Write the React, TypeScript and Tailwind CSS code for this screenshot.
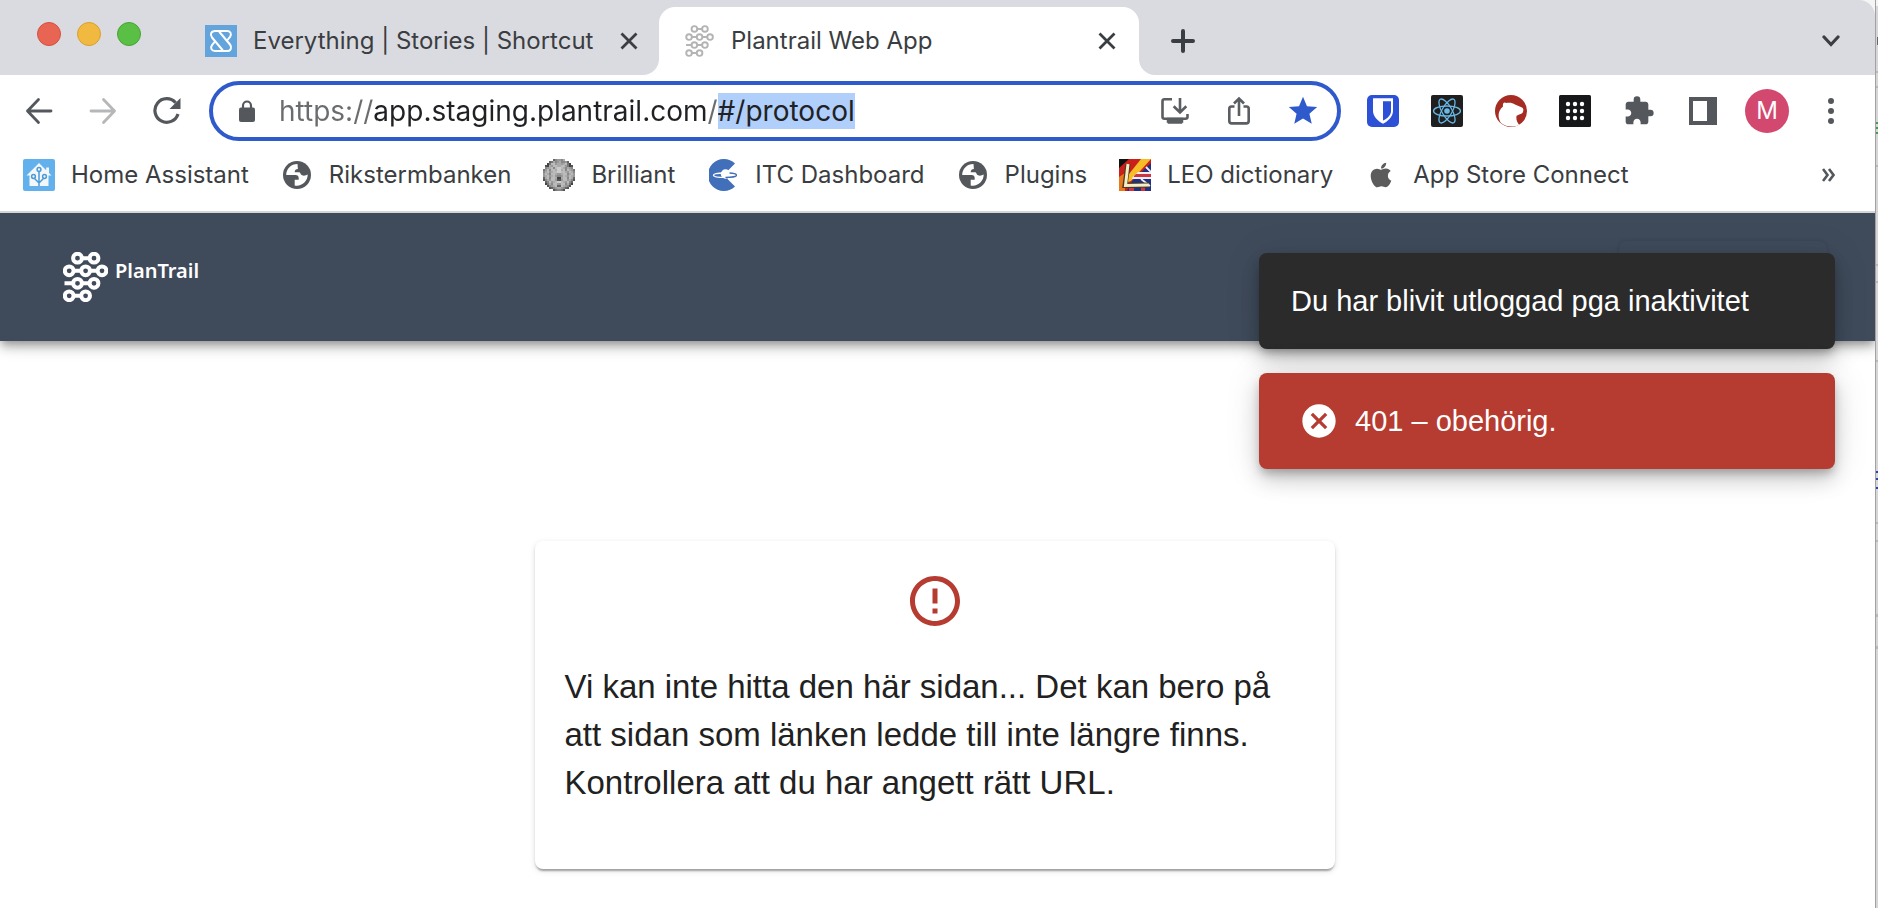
import React, { useEffect, useRef } from "react";
import { MdExtension, MdStar, MdCancel, MdErrorOutline } from "react-icons/md";
import { FaApple } from "react-icons/fa";

function ShortcutIcon() {
  return (
    <svg viewBox="0 0 32 32" className="size-8 shrink-0" aria-hidden="true">
      <rect width="32" height="32" fill="#63a4dd" />
      <g fill="none" stroke="#fff" strokeWidth="2" strokeLinejoin="round" strokeLinecap="round">
        <path d="M22.500 15l2.500-3.200C27 9 25.500 6 22 6H10C6 6 4.800 9.800 7 12.500L17.500 25" />
        <path d="M9.500 17 7 20.200C5 23 6.500 26 10 26h12c4 0 5.200-3.800 3-6.500L14.500 7" />
      </g>
    </svg>
  );
}

function NodesIcon({ className, stroke }: { className: string; stroke: number }) {
  return (
    <svg viewBox="0 0 45 50" className={className} fill="none" stroke="currentColor" strokeWidth={stroke} aria-hidden="true">
      <circle cx="14.500" cy="6.200" r="4.400" />
      <circle cx="31" cy="6.200" r="4.400" />
      <circle cx="6.200" cy="18.800" r="4.400" />
      <circle cx="22.600" cy="18.800" r="4.400" />
      <circle cx="39" cy="18.800" r="4.400" />
      <circle cx="14.500" cy="31.300" r="4.400" />
      <circle cx="31" cy="31.300" r="4.400" />
      <circle cx="6.200" cy="43.800" r="4.400" />
      <circle cx="22.600" cy="43.800" r="4.400" />
      <path d="M19 6.200h7.500M10.500 18.800h7.500M27 18.800h7.500M1.500 31.300H10M19 31.300h7.500M10.500 43.800h7.500" />
    </svg>
  );
}

function CloseIcon() {
  return (
    <svg viewBox="0 0 18 18" className="size-[18px]" stroke="#3a3d41" strokeWidth="2.800" aria-hidden="true">
      <path d="M1.500 1.500l15 15M16.500 1.500l-15 15" />
    </svg>
  );
}

function ArrowIcon({ flip }: { flip?: boolean }) {
  return (
    <svg viewBox="0 0 28 28" className={flip ? "size-7 -scale-x-100" : "size-7"} fill="none" stroke="currentColor" strokeWidth="2.800" strokeLinecap="round" strokeLinejoin="round" aria-hidden="true">
      <path d="M26 14H2.500M13.500 2.500 2.500 14l11 11.500" />
    </svg>
  );
}

function ReloadIcon() {
  return (
    <svg viewBox="0 0 28 28" className="size-7" aria-hidden="true">
      <path d="M25 17A11.800 11.800 0 1 1 22.600 5.700" fill="none" stroke="#54585d" strokeWidth="3.200" />
      <path d="M27.500 1v11H16.500z" fill="#54585d" />
    </svg>
  );
}

function LockIcon() {
  return (
    <svg viewBox="0 0 16 22" className="h-[22px] w-4" aria-hidden="true">
      <rect y="7.500" width="16" height="14.500" rx="2" fill="#54585d" />
      <path d="M4 9V5.500a4 4 0 0 1 8 0V9" fill="none" stroke="#54585d" strokeWidth="2.200" />
    </svg>
  );
}

function InstallIcon() {
  return (
    <svg viewBox="0 0 28 28" className="size-7" fill="none" stroke="#5a5d61" strokeWidth="2.600" aria-hidden="true">
      <path d="M11 2.300H3.500a2 2 0 0 0-2 2v15.500a2 2 0 0 0 2 2h21a2 2 0 0 0 2-2V17" />
      <path d="M19 1v14M12.700 9.200 19 15.400l6.300-6.200" />
      <path d="M6.500 21.500h15v3.600h-1v1h-13v-1h-1z" fill="#5a5d61" strokeWidth="1.500" />
    </svg>
  );
}

function ShareIcon() {
  return (
    <svg viewBox="0 0 24 30" className="h-[30px] w-6" fill="none" stroke="#5a5d61" strokeWidth="2.600" aria-hidden="true">
      <path d="M7.500 10.500h-3a2.200 2.200 0 0 0-2.200 2.200V25a2.400 2.400 0 0 0 2.400 2.400h14.600a2.400 2.400 0 0 0 2.400-2.400V12.700a2.200 2.200 0 0 0-2.200-2.200h-3" />
      <path d="M12 20V3M7 7.500 12 2.500l5 5" />
    </svg>
  );
}

function BitwardenIcon() {
  return (
    <svg viewBox="0 0 32 32" className="size-8" aria-hidden="true">
      <rect width="32" height="32" rx="5" fill="#2c50d6" />
      <path d="M6 3.300h20v12.500c0 6-5 10.500-10 13-5-2.500-10-7-10-13z" fill="#fff" />
      <path d="M16 6.200h8v10c0 4-3.500 7-8 9.400z" fill="#2c50d6" />
    </svg>
  );
}

function ReactIcon() {
  return (
    <svg viewBox="0 0 32 32" className="size-8" aria-hidden="true">
      <rect width="32" height="32" rx="2" fill="#1f1f1f" />
      <circle cx="16" cy="16" r="2.800" fill="#68b8e8" />
      <g fill="none" stroke="#68b8e8" strokeWidth="1.300">
        <ellipse cx="16" cy="16" rx="13.500" ry="5" />
        <ellipse cx="16" cy="16" rx="13.500" ry="5" transform="rotate(60 16 16)" />
        <ellipse cx="16" cy="16" rx="13.500" ry="5" transform="rotate(120 16 16)" />
      </g>
    </svg>
  );
}

function DogIcon() {
  return (
    <svg viewBox="0 0 32 32" className="size-8" aria-hidden="true">
      <circle cx="16" cy="16" r="16" fill="#a62c23" />
      <path d="M6 28C2.500 23 2.500 16 8 11.500 7.500 8 9 6.500 11.500 8c3-.6 6-.3 8.500 1.500l7 3c1.600 1 1.800 3 .6 5.200-1.400 1.700-4 1.600-6 3-.8 3 .4 6.500 2.600 9.300C18 32.500 11 32 6 28z" fill="#fff" />
    </svg>
  );
}

function DotsIcon() {
  const steps = [9, 16, 23];
  return (
    <svg viewBox="0 0 32 32" className="size-8" aria-hidden="true">
      <rect width="32" height="32" rx="1.500" fill="#17181a" />
      {steps.map((y) => steps.map((x) => <circle key={`${x}-${y}`} cx={x} cy={y} r="2.200" fill="#fff" />))}
    </svg>
  );
}

function HomeAssistantIcon() {
  return (
    <svg viewBox="0 0 32 32" className="size-8" aria-hidden="true">
      <rect width="32" height="32" rx="2" fill="#62b1ec" />
      <path d="M16 4 3.500 16.500h3V27h19V16.500h3L26 14V8.500h-2.800v2.700z" fill="#f4f6f8" />
      <g fill="none" stroke="#4a9bd9" strokeWidth="1.500">
        <path d="M16 27V12.500M16 24l-4.500-4.500V19M16 24l4.500-4.500V19" />
        <circle cx="16" cy="10.500" r="1.900" />
        <circle cx="10.500" cy="17.500" r="1.900" />
        <circle cx="21.500" cy="17.500" r="1.900" />
      </g>
    </svg>
  );
}

function GlobeIcon() {
  return (
    <svg viewBox="0 0 28 28" className="size-7" aria-hidden="true">
      <circle cx="14" cy="14" r="14" fill="#54585d" />
      <path d="M14.500 3C8 3 3.300 7.800 3.200 14h9.500c1.800 0 3 1.200 3 3v1.800h-4v5.800c6.500 1.500 13-4 13-11-2 1-4 1.500-6 .5-1.500-.8-1-2.800-3-2.800h-4c0-2.500 1.200-3.300 3.200-3.300z" fill="#fff" />
    </svg>
  );
}

const sphereRows = [
  "     68998a     ",
  "   67a89a8896   ",
  "  47bb9aa9ab74  ",
  " 54a9bbaabb9745 ",
  " 89ab8bccba8a98 ",
  "79b8bbaccab8ba97",
  "8ab9abbccbba9ba8",
  "9ba8bba99abb8ab9",
  "9ab9ab9889ba9ba9",
  "6ab8bba44abb8ba6",
  "58a9bb9559bb9a85",
  " 68b9abccba9b86 ",
  " 47a8bb99bb8a74 ",
  "  589ab66ba985  ",
  "   5689aa9865   ",
  "     578875     ",
];

function SphereIcon() {
  return (
    <svg viewBox="0 0 16 16" className="size-8" shapeRendering="crispEdges" aria-hidden="true">
      {sphereRows.map((row, y) =>
        row.split("").map((c, x) => (c === " " ? null : <rect key={`${x}-${y}`} x={x} y={y} width="1" height="1" fill={`#${c}${c}${c}`} />)),
      )}
    </svg>
  );
}

function PlanetIcon() {
  return (
    <svg viewBox="0 0 28 32" className="h-8 w-7" aria-hidden="true">
      <path d="M26 4.500A16 16 0 1 0 26 27.500L18.500 20V12z" fill="#416fb9" />
      <circle cx="16.500" cy="15" r="4.700" fill="#fff" />
      <path d="M14 14C8 14 4.500 15 4.500 16.200s4 2.200 12 2.200" fill="none" stroke="#fff" strokeWidth="1.400" />
      <path d="M20.500 14c4.500.2 7 1 7 2.200s-4.500 2.200-11 2.200" fill="none" stroke="#416fb9" strokeWidth="1.400" />
    </svg>
  );
}

function LeoIcon() {
  return (
    <svg viewBox="0 0 32 32" className="size-8" aria-hidden="true">
      <rect width="32" height="32" fill="#c9211a" />
      <path d="M0 0h10L0 9z" fill="#111" />
      <path d="M22 0h10L12 22l-10 3z" fill="#f6bd27" />
      <path d="M0 18l6-4v18H0z" fill="#e87a1c" />
      <path d="M32 4v28H8l5-10z" fill="#22307f" />
      <path d="M13 19l6-6h13v7H13z" fill="#eef0f6" />
      <path d="M15 17l2-2h15v3H15z" fill="#cf3540" />
      <path d="M22 20l9 7M27 8l5 5" stroke="#eef0f6" strokeWidth="1.800" />
      <path d="M10 29h5v3h-5zM22 28h4v4h-4z" fill="#cf3540" />
      <path d="M9 5 6 26.500l24-.5" fill="none" stroke="#4a3c20" strokeWidth="5" />
      <path d="M9 5 6.500 26.500 30 26" fill="none" stroke="#f4edc6" strokeWidth="3" />
    </svg>
  );
}

const bookmarks = [
  { label: "Home Assistant", icon: <HomeAssistantIcon /> },
  { label: "Rikstermbanken", icon: <GlobeIcon /> },
  { label: "Brilliant", icon: <SphereIcon /> },
  { label: "ITC Dashboard", icon: <PlanetIcon /> },
  { label: "Plugins", icon: <GlobeIcon /> },
  { label: "LEO dictionary", icon: <LeoIcon /> },
  { label: "App Store Connect", icon: <FaApple className="size-7 text-[#5c5c5c]" /> },
];

const extensions = [
  { label: "Bitwarden", icon: <BitwardenIcon /> },
  { label: "React Developer Tools", icon: <ReactIcon /> },
  { label: "Dog extension", icon: <DogIcon /> },
  { label: "Grid extension", icon: <DotsIcon /> },
  { label: "Extensions", icon: <MdExtension className="size-8 text-[#54585d]" /> },
];

function IconButton({ label, children }: { label: string; children: React.ReactNode }) {
  return (
    <button type="button" aria-label={label} className="flex h-12 w-16 shrink-0 items-center justify-center">
      {children}
    </button>
  );
}

function TabStrip() {
  return (
    <div className="flex h-[75px] items-end rounded-tr-2xl bg-[#dadbe0] pl-[37px]">
      <div className="flex gap-4 self-start pt-[22px]">
        <button type="button" aria-label="Close window" className="size-6 rounded-full border border-[#d5503f] bg-[#e96553]" />
        <button type="button" aria-label="Minimize window" className="size-6 rounded-full border border-[#d9a02f] bg-[#f1b93f]" />
        <button type="button" aria-label="Zoom window" className="size-6 rounded-full border border-[#46a532] bg-[#5abf45]" />
      </div>
      <div className="ml-12 flex h-[68px] w-[470px] shrink-0 items-center px-4">
        <ShortcutIcon />
        <span className="ml-4 flex-1 whitespace-nowrap">Everything | Stories | Shortcut</span>
        <button type="button" aria-label="Close tab" className="mr-[5px]"><CloseIcon /></button>
      </div>
      <div className="relative flex h-[68px] w-[480px] shrink-0 items-center rounded-t-2xl bg-white px-[26px]">
        <svg viewBox="0 0 16 16" className="absolute right-full bottom-0 size-4" fill="#fff" aria-hidden="true"><path d="M16 0v16H0A16 16 0 0 0 16 0z" /></svg>
        <svg viewBox="0 0 16 16" className="absolute bottom-0 left-full size-4" fill="#fff" aria-hidden="true"><path d="M0 0v16h16A16 16 0 0 1 0 0z" /></svg>
        <NodesIcon className="h-8 w-[29px] text-[#b4b4b4]" stroke={3} />
        <span className="ml-[17px] flex-1 whitespace-nowrap">Plantrail Web App</span>
        <button type="button" aria-label="Close tab" className="-mr-[3px]"><CloseIcon /></button>
      </div>
      <button type="button" aria-label="New tab" className="ml-3 flex h-[68px] w-16 items-center justify-center">
        <svg viewBox="0 0 24 24" className="size-6" stroke="#3a3d41" strokeWidth="4" strokeLinecap="round" aria-hidden="true"><path d="M12 2v20M2 12h20" /></svg>
      </button>
      <button type="button" aria-label="Search tabs" className="mr-3 ml-auto flex h-[68px] w-16 items-center justify-center">
        <svg viewBox="0 0 18 12" className="h-3 w-[18px]" fill="none" stroke="#3a3d41" strokeWidth="3.200" strokeLinecap="round" aria-hidden="true"><path d="M2 2l7 7.500L16 2" /></svg>
      </button>
    </div>
  );
}

const address = "https://app.staging.plantrail.com/#/protocol";

function AddressBar() {
  const ref = useRef<HTMLInputElement>(null);
  useEffect(() => {
    ref.current?.focus();
    ref.current?.setSelectionRange(address.indexOf("#"), address.length);
  }, []);
  return (
    <div className="ml-[10px] flex h-[60px] min-w-0 flex-1 items-center rounded-full border-4 border-[#2f5acb] bg-white pr-[2px] pl-[18px]">
      <span className="flex w-8 shrink-0 justify-center"><LockIcon /></span>
      <input
        ref={ref}
        type="text"
        aria-label="Address"
        defaultValue={address}
        spellCheck={false}
        className="ml-4 h-9 min-w-0 flex-1 bg-[linear-gradient(to_right,#6a6c6f_95px,#202124_95px,#202124_428px,#6a6c6f_428px)] bg-clip-text font-['Inter',sans-serif] text-[28px] leading-9 text-transparent outline-none selection:bg-[#b1cffb] selection:text-[#202124]"
      />
      <IconButton label="Install app"><InstallIcon /></IconButton>
      <IconButton label="Share"><ShareIcon /></IconButton>
      <IconButton label="Bookmark this page"><MdStar className="size-[34px] text-[#2f5acb]" /></IconButton>
    </div>
  );
}

function Toolbar() {
  return (
    <div className="flex h-[72px] items-center bg-white pr-3 pl-[7px]">
      <div className="flex text-[#54585d]">
        <IconButton label="Back"><ArrowIcon /></IconButton>
        <span className="text-[#b5b7b9]"><IconButton label="Forward"><ArrowIcon flip /></IconButton></span>
        <IconButton label="Reload"><ReloadIcon /></IconButton>
      </div>
      <AddressBar />
      <div className="ml-[10px] flex items-center">
        {extensions.map((e) => <IconButton key={e.label} label={e.label}>{e.icon}</IconButton>)}
        <IconButton label="Side panel">
          <svg viewBox="0 0 28 28" className="size-7" aria-hidden="true"><path fill="#54585d" fillRule="evenodd" d="M0 0h28v28H0zM4 4v20h14V4z" /></svg>
        </IconButton>
        <button type="button" aria-label="Profile M" className="mx-[10px] size-11 rounded-full bg-[#d2486f] text-white">M</button>
        <IconButton label="Menu">
          <svg viewBox="0 0 6 28" className="h-7 w-[6px]" fill="#54585d" aria-hidden="true"><circle cx="3" cy="4" r="3" /><circle cx="3" cy="14" r="3" /><circle cx="3" cy="24" r="3" /></svg>
        </IconButton>
      </div>
    </div>
  );
}

function BookmarksBar() {
  return (
    <nav aria-label="Bookmarks" className="flex items-center border-b-2 border-[#d4d6d6] bg-white pr-6 pb-2 pl-[23px]">
      <div className="flex h-14 items-center gap-8">
        {bookmarks.map((b) => (
          <a key={b.label} href="#" className="flex items-center gap-4 whitespace-nowrap">
            <span className="flex w-8 justify-center">{b.icon}</span>
            {b.label}
          </a>
        ))}
      </div>
      <button type="button" aria-label="More bookmarks" className="mr-4 ml-auto">
        <svg viewBox="0 0 13 14" className="h-[14px] w-[13px]" fill="none" stroke="#54585d" strokeWidth="2.600" aria-hidden="true"><path d="M1 1l4.500 6L1 13M7 1l4.500 6L7 13" /></svg>
      </button>
    </nav>
  );
}

function Snackbars() {
  return (
    <div className="absolute top-10 right-10 flex w-[576px] flex-col gap-6 text-[29px] leading-10 text-white">
      <div role="status" className="flex h-24 items-center rounded-lg bg-[#2b2b2b] px-8 shadow-[0_6px_10px_-2px_rgba(0,0,0,0.25),0_12px_20px_rgba(0,0,0,0.14),0_2px_36px_rgba(0,0,0,0.12)]">
        Du har blivit utloggad pga inaktivitet
      </div>
      <div role="alert" className="flex h-24 items-center gap-4 rounded-lg bg-[#b63b30] px-10 shadow-[0_6px_10px_-2px_rgba(0,0,0,0.25),0_12px_20px_rgba(0,0,0,0.14),0_2px_36px_rgba(0,0,0,0.12)]">
        <MdCancel className="size-10" />
        401 – obehörig.
      </div>
    </div>
  );
}

function BackgroundEdge() {
  return (
    <div className="w-[3px] shrink-0 overflow-hidden border-l border-[#a2a2a2] bg-[#d6d6d6]" aria-hidden="true">
      <svg width="2" height="908" viewBox="0 0 2 908">
        <rect width="2" height="6" fill="#f5f5f5" />
        <g fill="#b9b9b9">
          <rect y="71" width="2" height="2" /><rect y="86" width="2" height="2" /><rect y="165" width="2" height="2" />
          <rect y="264" width="2" height="2" /><rect y="281" width="2" height="2" /><rect y="360" width="2" height="2" />
          <rect y="522" width="2" height="2" /><rect y="540" width="2" height="2" /><rect y="614" width="2" height="3" /><rect y="646" width="2" height="3" />
        </g>
        <path d="M1 37h1v8H1z" fill="#666" />
        <path d="M0 122h2v2H0zM0 127h2v2H0zM0 132h2v2H0z" fill="#459a53" />
        <path d="M0 471h2v2H0zM0 478h2v2H0zM0 487h2v2H0z" fill="#2747a8" />
      </svg>
    </div>
  );
}

export default function App() {
  return (
    <div className="flex min-h-screen bg-white">
      <div className="flex min-w-0 flex-1 flex-col">
        <div className="bg-[#f5f5f5] font-['Inter',sans-serif] text-2xl text-[#3a3d41]">
          <TabStrip />
          <Toolbar />
          <BookmarksBar />
        </div>
        <div className="relative flex-1 overflow-hidden bg-white font-['Liberation_Sans',Arial,sans-serif] text-[#212121]">
          <header className="flex h-32 items-center bg-[#3f4b5b] pr-12 pl-[63px] text-white shadow-[0_4px_8px_-2px_rgba(0,0,0,0.3),0_8px_10px_rgba(0,0,0,0.14),0_2px_20px_rgba(0,0,0,0.12)]">
            <NodesIcon className="h-[50px] w-[45px]" stroke={4} />
            <span className="ml-[7px] pb-3 font-['Noto_Sans',sans-serif] text-xl font-semibold">PlanTrail</span>
            <div className="ml-auto h-[72px] w-52 rounded-lg bg-[#3f4b5b] shadow-[0_0_4px_rgba(0,0,0,0.12)]" aria-hidden="true" />
          </header>
          <main className="flex justify-center pt-[200px] pr-1.5">
            <section className="flex w-[800px] flex-col items-center rounded-lg bg-white px-[30px] pt-[30px] pb-[62px] shadow-[0_4px_2px_-2px_rgba(0,0,0,0.2),0_2px_2px_rgba(0,0,0,0.14),0_2px_6px_rgba(0,0,0,0.12)]">
              <MdErrorOutline className="size-[60px] text-[#b63b30]" />
              <p className="mt-8 w-full text-[33px] leading-[48px]">
                Vi kan inte hitta den här sidan... Det kan bero på att sidan som länken ledde till inte längre finns. Kontrollera att du har angett rätt URL.
              </p>
            </section>
          </main>
          <Snackbars />
        </div>
      </div>
      <BackgroundEdge />
    </div>
  );
}
